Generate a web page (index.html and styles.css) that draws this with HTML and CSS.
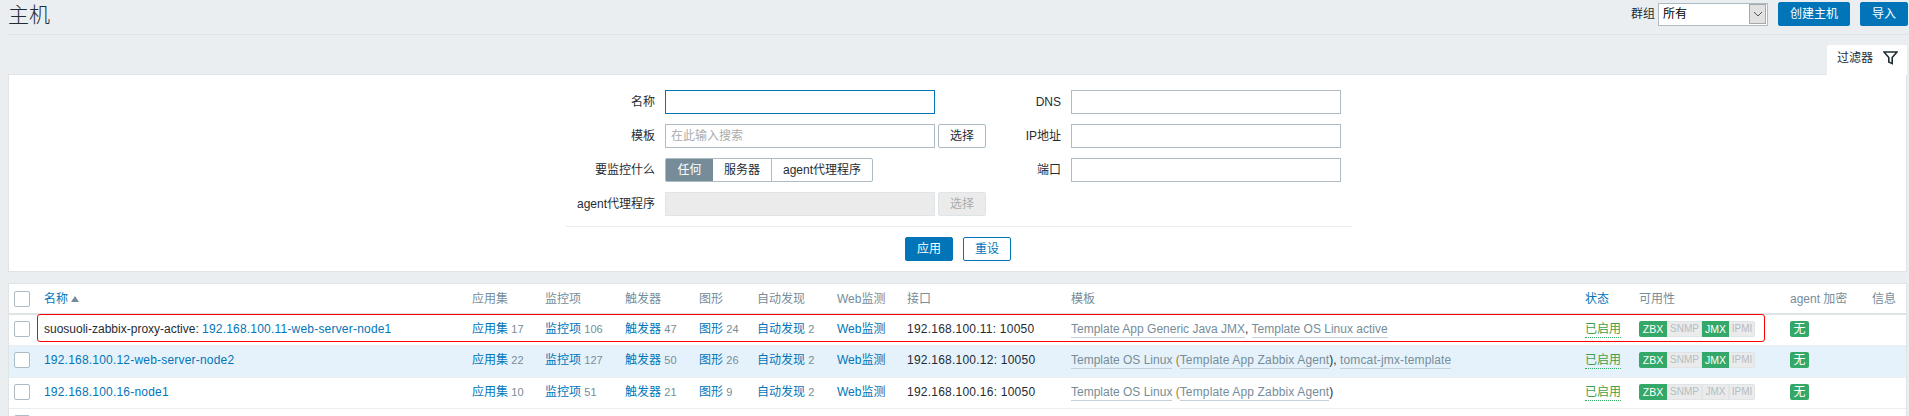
FILE: index.html
```html
<!DOCTYPE html>
<html lang="zh-CN">
<head>
    <meta charset="UTF-8">
    <title>主机</title>
    <link rel="stylesheet" href="styles.css">
</head>
<body>
    <header class="page-head">
        <h1>主机</h1>
        <div class="head-controls">
            <span class="group-label">群组</span>
            <div class="fake-select">
                <span class="fake-select-value">所有</span>
                <span class="fake-select-arrow">
                    <svg width="10" height="6" viewBox="0 0 10 6"><path d="M1 1l4 4 4-4" fill="none" stroke="#555" stroke-width="1"/></svg>
                </span>
            </div>
            <button class="btn btn-wide">创建主机</button>
            <button class="btn btn-import">导入</button>
        </div>
    </header>

    <div class="filter-tabs">
        <div class="filter-tab">
            <span>过滤器</span>
            <svg class="filter-icon" width="15" height="14" viewBox="0 0 15 14"><path d="M1 1h13L9.2 6.6V12.6L5.8 11V6.6z" fill="none" stroke="#1f2c33" stroke-width="1.6"/></svg>
        </div>
    </div>

    <section class="filter-panel">
        <form class="filter-form">
            <label>名称</label>
            <div class="field"><input class="text-input focus" type="text"></div>
            <label>DNS</label>
            <div class="field"><input class="text-input" type="text"></div>

            <label>模板</label>
            <div class="field">
                <input class="text-input" type="text" placeholder="在此输入搜索">
                <button type="button" class="btn-select">选择</button>
            </div>
            <label>IP地址</label>
            <div class="field"><input class="text-input" type="text"></div>

            <label>要监控什么</label>
            <div class="field">
                <div class="radio-group">
                    <span class="radio active">任何</span>
                    <span class="radio r-server">服务器</span>
                    <span class="radio r-agent">agent代理程序</span>
                </div>
            </div>
            <label>端口</label>
            <div class="field"><input class="text-input" type="text"></div>

            <label>agent代理程序</label>
            <div class="field">
                <input class="text-input disabled" type="text" disabled>
                <button type="button" class="btn-select disabled" disabled>选择</button>
            </div>
            <span></span>
            <span></span>
        </form>
        <div class="filter-actions">
            <button class="btn btn-apply">应用</button>
            <button class="btn-reset">重设</button>
        </div>
    </section>

    <div class="list-wrap">
        <table class="host-list">
            <colgroup>
                <col class="c-check"><col class="c-name"><col class="c-app"><col class="c-item"><col class="c-trig"><col class="c-graph"><col class="c-disc"><col class="c-web"><col class="c-iface"><col class="c-tpl"><col class="c-status"><col class="c-avail"><col class="c-enc"><col class="c-info">
            </colgroup>
            <thead>
                <tr>
                    <th><span class="check"></span></th>
                    <th><a href="#">名称</a><span class="sort-up"></span></th>
                    <th>应用集</th>
                    <th>监控项</th>
                    <th>触发器</th>
                    <th>图形</th>
                    <th>自动发现</th>
                    <th>Web监测</th>
                    <th>接口</th>
                    <th>模板</th>
                    <th><a href="#">状态</a></th>
                    <th>可用性</th>
                    <th>agent 加密</th>
                    <th>信息</th>
                </tr>
            </thead>
            <tbody>
                <tr>
                    <td><span class="check"></span></td>
                    <td class="host-name">suosuoli-zabbix-proxy-active: <a href="#">192.168.100.11-web-server-node1</a></td>
                    <td><a href="#">应用集</a> <sup>17</sup></td>
                    <td><a href="#">监控项</a> <sup>106</sup></td>
                    <td><a href="#">触发器</a> <sup>47</sup></td>
                    <td><a href="#">图形</a> <sup>24</sup></td>
                    <td><a href="#">自动发现</a> <sup>2</sup></td>
                    <td><a href="#">Web监测</a></td>
                    <td class="iface">192.168.100.11: 10050</td>
                    <td><a class="tpl" href="#">Template App Generic Java JMX</a>, <a class="tpl" href="#">Template OS Linux active</a></td>
                    <td><a class="status" href="#">已启用</a></td>
                    <td><div class="avail"><span class="on">ZBX</span><span class="off">SNMP</span><span class="on">JMX</span><span class="off">IPMI</span></div></td>
                    <td><span class="enc">无</span></td>
                    <td></td>
                </tr>
                <tr class="hover">
                    <td><span class="check"></span></td>
                    <td class="host-name"><a href="#">192.168.100.12-web-server-node2</a></td>
                    <td><a href="#">应用集</a> <sup>22</sup></td>
                    <td><a href="#">监控项</a> <sup>127</sup></td>
                    <td><a href="#">触发器</a> <sup>50</sup></td>
                    <td><a href="#">图形</a> <sup>26</sup></td>
                    <td><a href="#">自动发现</a> <sup>2</sup></td>
                    <td><a href="#">Web监测</a></td>
                    <td class="iface">192.168.100.12: 10050</td>
                    <td><a class="tpl" href="#">Template OS Linux</a> <span class="paren">(</span><a class="tpl tpl-linked" href="#">Template App Zabbix Agent</a>), <a class="tpl tpl-linked" href="#">tomcat-jmx-template</a></td>
                    <td><a class="status" href="#">已启用</a></td>
                    <td><div class="avail"><span class="on">ZBX</span><span class="off">SNMP</span><span class="on">JMX</span><span class="off">IPMI</span></div></td>
                    <td><span class="enc">无</span></td>
                    <td></td>
                </tr>
                <tr>
                    <td><span class="check"></span></td>
                    <td class="host-name"><a href="#">192.168.100.16-node1</a></td>
                    <td><a href="#">应用集</a> <sup>10</sup></td>
                    <td><a href="#">监控项</a> <sup>51</sup></td>
                    <td><a href="#">触发器</a> <sup>21</sup></td>
                    <td><a href="#">图形</a> <sup>9</sup></td>
                    <td><a href="#">自动发现</a> <sup>2</sup></td>
                    <td><a href="#">Web监测</a></td>
                    <td class="iface">192.168.100.16: 10050</td>
                    <td><a class="tpl" href="#">Template OS Linux</a> <span class="paren">(</span><a class="tpl tpl-linked" href="#">Template App Zabbix Agent</a>)</td>
                    <td><a class="status" href="#">已启用</a></td>
                    <td><div class="avail"><span class="on">ZBX</span><span class="off">SNMP</span><span class="off">JMX</span><span class="off">IPMI</span></div></td>
                    <td><span class="enc">无</span></td>
                    <td></td>
                </tr>
                <tr>
                    <td><span class="check"></span></td>
                    <td colspan="13"></td>
                </tr>
            </tbody>
        </table>
        <div class="red-mark"></div>
    </div>
</body>
</html>
```

FILE: styles.css
```css
* {
    box-sizing: border-box;
}
html, body {
    height: 416px;
    overflow: hidden;
}
body {
    margin: 0;
    padding: 0 2px 0 8px;
    background: #ebeef0;
    color: #1f2c33;
    font: 12px/14px "Liberation Sans", "Noto Sans CJK SC", sans-serif;
}
a {
    color: #0275b8;
    text-decoration: none;
}
button, input {
    font: inherit;
}

/* page title row */
.page-head {
    display: flex;
    justify-content: space-between;
    align-items: flex-start;
    height: 35px;
    margin-right: -2px;
    padding: 2px 1px 0 0;
    border-bottom: 1px solid #dfe4e7;
}
.page-head h1 {
    margin: 0;
    font-size: 21px;
    font-weight: 300;
    line-height: 26px;
}
.head-controls {
    display: flex;
    align-items: center;
    height: 24px;
}
.group-label {
    margin-right: 3px;
}
.fake-select {
    display: flex;
    width: 110px;
    height: 23px;
    padding: 0 1px 1px 0;
    border: 1px solid #acbbc4;
    background: #fff;
}
.fake-select-value {
    flex: 1;
    padding: 3px 4px;
    color: #000;
}
.fake-select-arrow {
    display: flex;
    align-items: center;
    justify-content: center;
    width: 17px;
    border: 1px solid #a8a8a8;
    background: #e1e1e1;
}
.btn {
    height: 24px;
    padding: 0;
    border: 1px solid #0275b8;
    border-radius: 2px;
    background: #0275b8;
    color: #fff;
}
.btn-wide {
    width: 72px;
    margin-left: 10px;
}
.btn-import {
    width: 48px;
    margin-left: 10px;
}

/* filter */
.filter-tabs {
    display: flex;
    justify-content: flex-end;
    margin-top: 10px;
}
.filter-tab {
    display: flex;
    align-items: center;
    width: 80px;
    height: 30px;
    margin-bottom: -1px;
    padding: 0 0 5px 10px;
    position: relative;
    z-index: 1;
    border-radius: 2px 2px 0 0;
    background: #fff;
}
.filter-icon {
    margin-left: 10px;
}
.filter-panel {
    height: 198px;
    padding-top: 15px;
    border: 1px solid #dfe4e7;
    background: #fff;
}
.filter-form {
    display: grid;
    grid-template-columns: 89px 321px 65px 270px;
    grid-auto-rows: 24px;
    gap: 10px;
    width: 786px;
    margin-left: 557px;
    padding-bottom: 10px;
    border-bottom: 1px solid #ebeef0;
}
.filter-form label {
    align-self: center;
    text-align: right;
}
.field {
    display: flex;
    gap: 3px;
}
.text-input {
    width: 270px;
    height: 24px;
    padding: 0 5px;
    border: 1px solid #acbbc4;
    border-radius: 0;
    background: #fff;
    outline: 0;
}
.text-input::placeholder {
    color: #acacac;
}
.text-input.focus {
    border-color: #0275b8;
}
.text-input.disabled {
    border-color: #dfe4e7;
    background: #ebebeb;
}
.btn-select {
    width: 48px;
    height: 24px;
    padding: 0;
    border: 1px solid #acbbc4;
    border-radius: 2px;
    background: #fff;
    color: #1f2c33;
}
.btn-select.disabled {
    border-color: #dfe4e7;
    background: #ebebeb;
    color: #acacac;
}
.radio-group {
    display: flex;
    height: 24px;
    border: 1px solid #acbbc4;
    border-radius: 2px;
}
.radio {
    width: 47px;
    line-height: 22px;
    text-align: center;
}
.radio.active {
    background: #768d99;
    color: #fff;
}
.r-server {
    width: 58px;
}
.r-agent {
    width: 101px;
    border-left: 1px solid #acbbc4;
}
.filter-actions {
    display: flex;
    justify-content: center;
    gap: 10px;
    margin: 10px 0 0 1px;
}
.btn-apply, .btn-reset {
    width: 48px;
}
.btn-reset {
    height: 24px;
    padding: 0;
    border: 1px solid #0275b8;
    border-radius: 2px;
    background: #fff;
    color: #0275b8;
}

/* host list */
.list-wrap {
    position: relative;
    height: 133px;
    margin-top: 11px;
    overflow: hidden;
    border: 1px solid #dfe4e7;
    border-bottom: 0;
    background: #fff;
}
.host-list {
    width: 100%;
    border-collapse: collapse;
    table-layout: fixed;
}
.c-check { width: 35px; }
.c-name { width: 428px; }
.c-app { width: 73px; }
.c-item { width: 80px; }
.c-trig { width: 74px; }
.c-graph { width: 58px; }
.c-disc { width: 80px; }
.c-web { width: 70px; }
.c-iface { width: 164px; }
.c-tpl { width: 514px; }
.c-status { width: 54px; }
.c-avail { width: 151px; }
.c-enc { width: 82px; }
.host-list th {
    height: 30px;
    padding: 0;
    border-bottom: 2px solid #dfe4e7;
    color: #768d99;
    font-weight: normal;
    text-align: left;
}
.host-list td {
    height: 31px;
    padding: 0 0 2px;
    border-bottom: 1px solid #ebeef0;
    white-space: nowrap;
}
.host-list tr.hover td {
    height: 32px;
    background: #e5f2fb;
}
.host-list sup {
    color: #768d99;
    font-size: 11px;
    vertical-align: baseline;
}
.host-name a {
    letter-spacing: .2px;
}
.iface {
    letter-spacing: .23px;
}
.check {
    display: block;
    width: 16px;
    height: 16px;
    margin-left: 5px;
    border: 1px solid #acbbc4;
    border-radius: 2px;
    background: #fff;
}
.sort-up {
    display: inline-block;
    margin-left: 3px;
    border: 4px solid transparent;
    border-top: 0;
    border-bottom: 6px solid #768d99;
    vertical-align: 1px;
}
.tpl {
    padding-bottom: 1px;
    border-bottom: 1px solid #c5d0d8;
    color: #768d99;
}
.tpl-linked {
    letter-spacing: .14px;
}
.paren {
    color: #b0792b;
}
.status {
    padding-bottom: 1px;
    border-bottom: 1px dotted #34af67;
    color: #429e47;
}
.avail {
    display: flex;
    width: 116px;
    height: 16px;
    font-size: 10.5px;
    line-height: 16px;
    text-align: center;
}
.avail span {
    width: 27px;
}
.avail span:nth-child(1) {
    width: 28px;
    border-radius: 2px 0 0 2px;
}
.avail span:nth-child(2) {
    width: 35px;
}
.avail span:nth-child(4) {
    width: 26px;
    border-radius: 0 2px 2px 0;
}
.avail .on {
    background: #34a868;
    color: #fff;
}
.avail .off {
    border: 1px solid #dfe4e7;
    background: #ebebeb;
    color: #b3bdc4;
    font-size: 10px;
    line-height: 14px;
}
.enc {
    display: block;
    width: 19px;
    height: 16px;
    border-radius: 2px;
    background: #34a868;
    color: #fff;
    line-height: 16px;
    text-align: center;
}
.red-mark {
    position: absolute;
    left: 28px;
    top: 30px;
    width: 1728px;
    height: 28px;
    border: 1px solid #f00;
    border-radius: 3px;
    pointer-events: none;
}
```
